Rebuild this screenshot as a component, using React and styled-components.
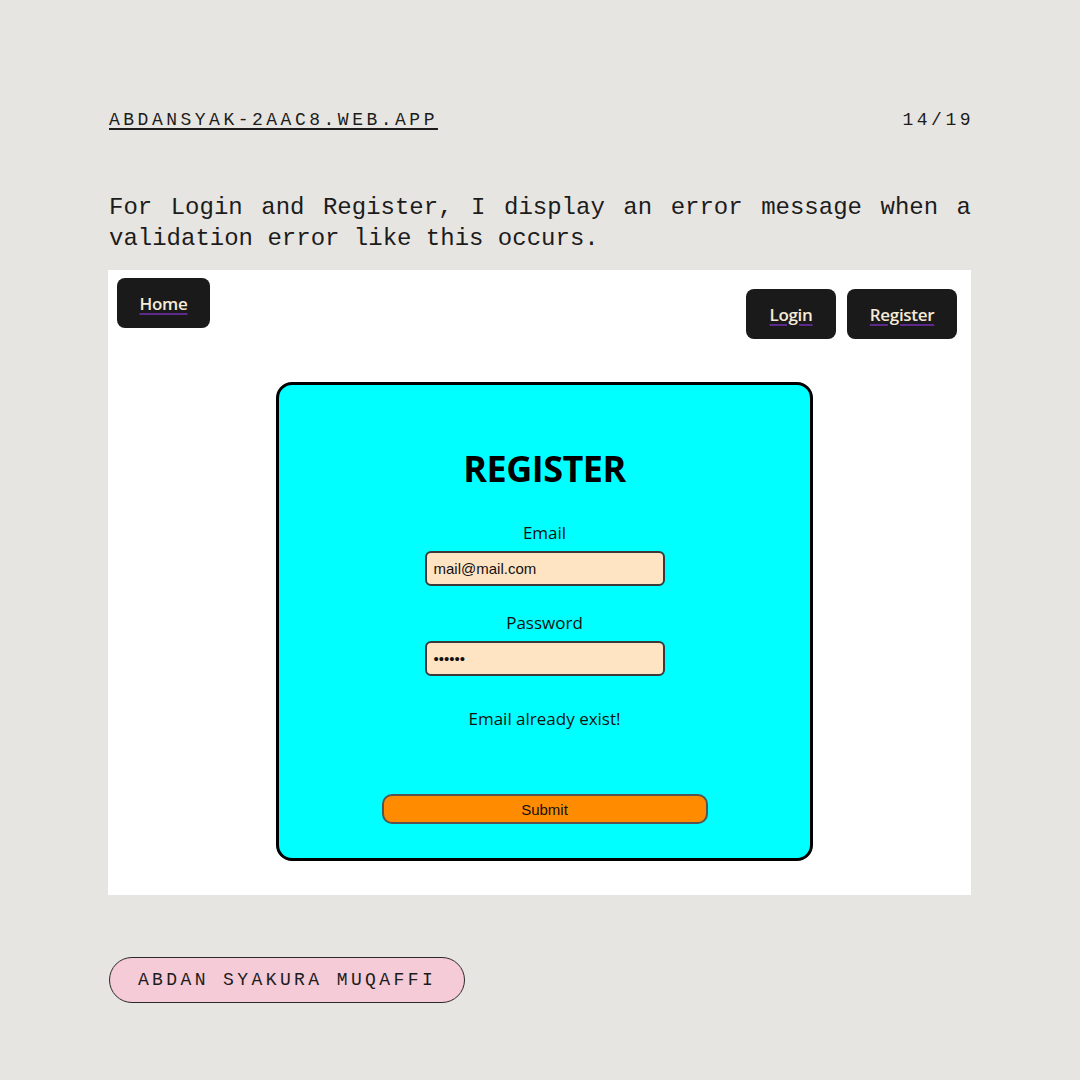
import React from "react";
import styled, { createGlobalStyle } from "styled-components";

const Global = createGlobalStyle`
  body {
    margin: 0;
    background: #e7e5e1;
  }
`;

const Page = styled.div`
  width: 1080px;
  height: 1080px;
  box-sizing: border-box;
  padding: 106px 109px 0 109px;
  background: #e7e5e1;
  color: #1c1c1c;
  font-family: "Liberation Mono", "DejaVu Sans Mono", monospace;
`;

const Top = styled.div`
  display: flex;
  justify-content: space-between;
  align-items: center;
  font-size: 18px;
  letter-spacing: 3.5px;
  line-height: 28px;
`;

const Site = styled.span`
  text-decoration: underline;
  text-decoration-thickness: 2px;
  text-underline-offset: 3px;
`;

const Count = styled.span`
  margin-right: -3px;
`;

const Intro = styled.p`
  margin: 58px 0 0 0;
  font-size: 24px;
  line-height: 31px;
  text-align: justify;
`;

const Shot = styled.div`
  margin-top: 16px;
  margin-left: -1px;
  width: 863px;
  height: 625px;
  background: #fff;
  box-sizing: border-box;
  padding: 8px 14px 0 9px;
  font-family: "Open Sans", "Noto Sans", sans-serif;
`;

const Nav = styled.div`
  display: flex;
  justify-content: space-between;
  align-items: flex-start;
`;

const NavRight = styled.div`
  display: flex;
  gap: 11px;
  margin-top: 11px;
`;

const NavBtn = styled.a`
  display: flex;
  align-items: center;
  justify-content: center;
  width: ${(p) => p.w}px;
  height: 50px;
  border-radius: 8px;
  background: #1a1a1a;
  color: #f6ead8;
  font-size: 17px;
  font-weight: 600;
  letter-spacing: -0.3px;
  text-decoration: underline;
  text-decoration-color: #5d2a8c;
  text-underline-offset: 3px;
  text-decoration-thickness: 2px;
`;

const Card = styled.div`
  margin: 43px 0 0 159px;
  width: 537px;
  height: 479px;
  box-sizing: border-box;
  border: 3px solid #000;
  border-radius: 16px;
  background: #00ffff;
  display: flex;
  flex-direction: column;
  align-items: center;
  padding-top: 60px;
`;

const Title = styled.h1`
  margin: 0;
  font-size: 36px;
  font-weight: 700;
  letter-spacing: -0.5px;
  line-height: 48px;
  color: #000;
`;

const Label = styled.label`
  margin-top: ${(p) => p.mt}px;
  font-size: 17px;
  line-height: 24px;
  color: #111;
`;

const Input = styled.div`
  margin-top: 6px;
  width: 240px;
  height: 35px;
  box-sizing: border-box;
  border: 2px solid #3a3a3a;
  border-radius: 6px;
  background: #ffe4c4;
  padding: 0 7px;
  display: flex;
  align-items: center;
  font-family: "Liberation Sans", Arial, sans-serif;
  font-size: 15px;
  color: #111;
`;

const Dots = styled.span`
  font-size: 15px;
`;

const Error = styled.p`
  margin: 31px 0 0 0;
  font-size: 17px;
  line-height: 24px;
  color: #111;
`;

const Submit = styled.button`
  margin-top: 63px;
  width: 326px;
  height: 30px;
  border: 2px solid #555;
  border-radius: 10px;
  background: #ff8c00;
  font-family: "Liberation Sans", Arial, sans-serif;
  font-size: 15px;
  color: #111;
`;

const Author = styled.div`
  margin-top: 62px;
  width: 356px;
  height: 46px;
  box-sizing: border-box;
  border: 1px solid #2a2a2a;
  border-radius: 23px;
  background: #f5cbd8;
  display: flex;
  align-items: center;
  justify-content: center;
  font-size: 18px;
  letter-spacing: 3.4px;
`;

export default function App() {
  return (
    <Page>
      <Global />
      <Top>
        <Site>ABDANSYAK-2AAC8.WEB.APP</Site>
        <Count>14/19</Count>
      </Top>
      <Intro>
        For Login and Register, I display an error message when a validation
        error like this occurs.
      </Intro>
      <Shot>
        <Nav>
          <NavBtn w={93}>Home</NavBtn>
          <NavRight>
            <NavBtn w={90}>Login</NavBtn>
            <NavBtn w={110}>Register</NavBtn>
          </NavRight>
        </Nav>
        <Card>
          <Title>REGISTER</Title>
          <Label mt={28}>Email</Label>
          <Input>mail@mail.com</Input>
          <Label mt={25}>Password</Label>
          <Input>
            <Dots>••••••</Dots>
          </Input>
          <Error>Email already exist!</Error>
          <Submit>Submit</Submit>
        </Card>
      </Shot>
      <Author>ABDAN SYAKURA MUQAFFI</Author>
    </Page>
  );
}
